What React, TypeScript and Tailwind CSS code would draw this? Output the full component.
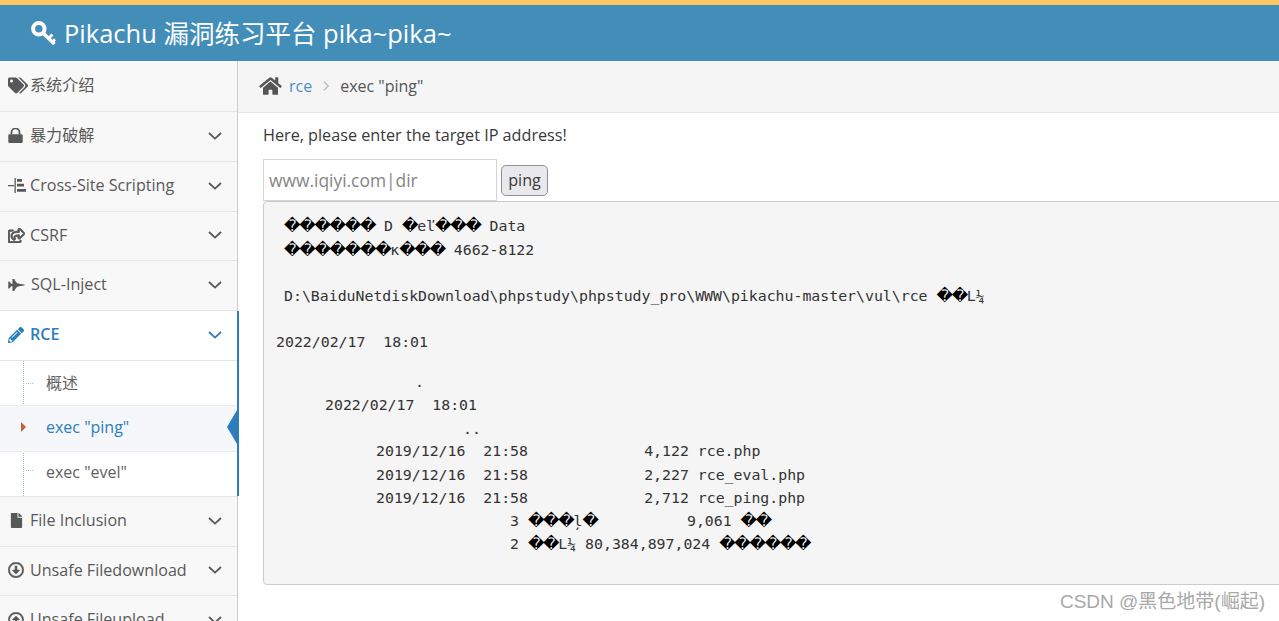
import React from 'react';
import {
  FaFile,
  FaFighterJet,
  FaHome,
  FaPencilAlt,
  FaRegArrowAltCircleDown,
  FaRegArrowAltCircleUp,
  FaRegShareSquare,
  FaTags,
} from 'react-icons/fa';

const KeyIcon = () => (
  <svg viewBox="0 0 24 24" className="mr-2 h-[25px] w-[25px]" fill="none" stroke="currentColor">
    <circle cx="7.500" cy="7.500" r="5.500" strokeWidth="3.800" />
    <path d="M11.500 11.500L22.500 22" strokeWidth="3.400" />
    <path d="M17 16.500l3.600-3.600M20.500 20l2.500-2.500" strokeWidth="2.800" />
  </svg>
);

const LockIcon = () => (
  <svg viewBox="0 0 15 15" className="h-[15px] w-[15px]" fill="currentColor">
    <path d="M1.500 6.200h12a1.200 1.200 0 0 1 1.200 1.200v6.400a1.200 1.200 0 0 1-1.200 1.200h-12A1.200 1.200 0 0 1 .3 13.800V7.400a1.200 1.200 0 0 1 1.200-1.200z" />
    <path d="M3.500 6.500V4.400a4 4 0 0 1 8 0v2.100" fill="none" stroke="currentColor" strokeWidth="1.800" />
  </svg>
);

const SitemapIcon = () => (
  <svg viewBox="0 0 18 15" className="h-[15px] w-[18px]" fill="currentColor">
    <path d="M0 7h6v1.200H0zM6.500 0h1.300v15H6.500zM9 1h5v2.800H9zM9 5.800h7v2.800H9zM9 11h9v2.800H9z" />
  </svg>
);

const Chevron = () => (
  <svg viewBox="0 0 14 8" className="ml-auto h-[8px] w-[14px] shrink-0" fill="none" stroke="currentColor" strokeWidth="1.800">
    <path d="M1 1l6 5.600L13 1" />
  </svg>
);

type Item = { label: string; icon: React.ReactNode; chevron?: boolean; rowClass: string; gap?: string };

const topItems: Item[] = [
  { label: '系统介绍', icon: <FaTags className="h-[17px] w-[20px]" />, rowClass: 'h-[51px]' },
  { label: '暴力破解', icon: <LockIcon />, chevron: true, rowClass: 'h-[50px]' },
  { label: 'Cross-Site Scripting', icon: <SitemapIcon />, chevron: true, rowClass: 'h-[50px]' },
  { label: 'CSRF', icon: <FaRegShareSquare className="h-[15px] w-[17px]" stroke="currentColor" strokeWidth={30} />, chevron: true, rowClass: 'h-[49px]' },
  { label: 'SQL-Inject', icon: <FaFighterJet className="h-[16px] w-[17px]" />, chevron: true, rowClass: 'h-[50px]', gap: 'w-[23px]' },
];

const bottomItems: Item[] = [
  { label: 'File Inclusion', icon: <FaFile className="ml-[2px] h-[15px] w-[13px]" />, chevron: true, rowClass: 'h-[50px]' },
  { label: 'Unsafe Filedownload', icon: <FaRegArrowAltCircleDown className="h-[16px] w-[16px]" stroke="currentColor" strokeWidth={16} />, chevron: true, rowClass: 'h-[49px]' },
  { label: 'Unsafe Fileupload', icon: <FaRegArrowAltCircleUp className="h-[16px] w-[16px]" stroke="currentColor" strokeWidth={16} />, chevron: true, rowClass: 'h-[50px]' },
];

const NavRow = ({ item }: { item: Item }) => (
  <div className={`flex shrink-0 items-center border-b border-[#e5e5e5] bg-[#f8f8f8] pb-[2px] pl-2 pr-[15px] text-[#585858] ${item.rowClass}`}>
    <span className={`flex shrink-0 items-center ${item.gap ?? 'w-[22px]'}`}>{item.icon}</span>
    <span className="text-[16.1px]">{item.label}</span>
    {item.chevron && <Chevron />}
  </div>
);

// the garbled command output: the replacement glyphs are much wider than the mono cells
const Garbled = ({ text }: { text: string }) => (
  <>
    {text.split('').map((ch, i) =>
      ch === '�' ? (
        <span key={i} className="inline-block w-[15.2px] text-center font-['DejaVu_Sans',sans-serif] text-[16px] leading-none text-black">
          {ch}
        </span>
      ) : (
        <React.Fragment key={i}>{ch}</React.Fragment>
      ),
    )}
  </>
);

const outputLines: { text: string; h: string; pl: string }[] = [
  { text: '������ D �eľ��� Data', h: 'h-[24px]', pl: 'pl-[8px]' },
  { text: '�������к��� 4662-8122', h: 'h-[46px]', pl: 'pl-[8px]' },
  { text: 'D:\\BaiduNetdiskDownload\\phpstudy\\phpstudy_pro\\WWW\\pikachu-master\\vul\\rce ��L¼', h: 'h-[46px]', pl: 'pl-[8px]' },
  { text: '2022/02/17  18:01', h: 'h-[40px]', pl: 'pl-0' },
  { text: '.', h: 'h-[23px]', pl: 'pl-[139px]' },
  { text: '2022/02/17  18:01', h: 'h-[24px]', pl: 'pl-[49px]' },
  { text: '..', h: 'h-[22px]', pl: 'pl-[187px]' },
  { text: '2019/12/16  21:58             4,122 rce.php', h: 'h-[24px]', pl: 'pl-[100px]' },
  { text: '2019/12/16  21:58             2,227 rce_eval.php', h: 'h-[23px]', pl: 'pl-[100px]' },
  { text: '2019/12/16  21:58             2,712 rce_ping.php', h: 'h-[23px]', pl: 'pl-[100px]' },
  { text: '3 ���ļ�          9,061 ��', h: 'h-[23px]', pl: 'pl-[234px]' },
  { text: '2 ��L¼ 80,384,897,024 ������', h: 'h-[23px]', pl: 'pl-[234px]' },
];

export default function App() {
  return (
    <div className="flex h-[621px] w-[1279px] flex-col overflow-hidden bg-white font-['Open_Sans','Noto_Sans_CJK_SC',sans-serif] text-[#393939]">
      <header className="flex h-[61px] shrink-0 items-center border-t-[5px] border-[#fcc763] bg-[#438eb9] pl-[31px] text-white">
        <KeyIcon />
        <span className="text-[25.5px]">Pikachu 漏洞练习平台 pika~pika~</span>
      </header>

      <div className="flex min-h-0 flex-1">
        <aside className="w-[238px] shrink-0 border-r border-[#ccc] bg-[#f8f8f8]">
          {topItems.map((item) => (
            <NavRow key={item.label} item={item} />
          ))}

          <div className="relative -mr-[2px] border-r-2 border-[#2b7dbc] bg-white">
            <div className="flex h-[50px] items-center border-b border-[#e5e5e5] pb-[2px] pl-2 pr-[15px] text-[#2b7dbc]">
              <span className="flex w-[22px] shrink-0 items-center">
                <FaPencilAlt className="h-[16px] w-[16px]" />
              </span>
              <span className="text-[16.1px] font-semibold">RCE</span>
              <Chevron />
            </div>

            <div className="relative">
              <div className="absolute bottom-0 left-[23px] top-0 border-l border-dotted border-[#9dbdd6]" />
              <div className="flex h-[44px] items-center pl-[46px] text-[16px] text-[#616161]">
                <span className="absolute left-[26px] w-[7px] border-t border-dotted border-[#9dbdd6]" />
                概述
              </div>
              <div className="relative flex h-[47px] items-center border-y border-dotted border-[#e4e4e4] bg-[#f5f7fb] pb-[3px] pl-[46px] text-[16px] text-[#2b7dbc]">
                <span className="absolute left-[21px] h-0 w-0 border-y-[5px] border-l-[5px] border-y-transparent border-l-[#c86139]" />
                exec "ping"
                <span className="absolute right-0 h-0 w-0 border-y-[17px] border-r-[10px] border-y-transparent border-r-[#2b7dbc]" />
              </div>
              <div className="flex h-[44px] items-center pb-[5px] pl-[46px] text-[16px] text-[#616161]">
                <span className="absolute left-[26px] mt-[-3px] w-[7px] border-t border-dotted border-[#9dbdd6]" />
                exec "evel"
              </div>
            </div>
          </div>

          <div className="border-t border-[#e5e5e5]">
            {bottomItems.map((item) => (
              <NavRow key={item.label} item={item} />
            ))}
          </div>
        </aside>

        <main className="relative min-w-0 flex-1">
          <div className="flex h-[52px] items-center border-b border-[#e5e5e5] bg-[#f5f5f5] pb-[2px] pl-[21px] text-[16px]">
            <FaHome className="mr-[7px] h-[20px] w-[23px] text-[#555]" />
            <span className="text-[#4c8fbd]">rce</span>
            <span className="ml-[11px] mr-[10px] text-[#b2b6bf]">
              <svg viewBox="0 0 8 12" className="h-[12px] w-[7px]" fill="none" stroke="currentColor" strokeWidth="1.500">
                <path d="M1 1l5 5-5 5" />
              </svg>
            </span>
            <span className="text-[#555]">exec "ping"</span>
          </div>

          <div className="pl-[25px]">
            <p className="pt-[11px] text-[16.2px] leading-[22px] text-[#393939]">Here, please enter the target IP address!</p>
            <div className="mt-[13px] flex items-end">
              <div className="flex h-[42px] w-[234px] items-center border border-[#d5d5d5] bg-white pl-[5px] text-[17.4px] text-[#858585]">
                www.iqiyi.com|dir
              </div>
              <button className="mb-[5px] ml-1 h-[31px] w-[47px] rounded-[5px] border border-[#8f8f9d] bg-[#e9e9ed] text-[16.2px] text-[#393939]">
                ping
              </button>
            </div>
            <div className="-mr-2 h-[384px] rounded-[4px] border border-[#ccc] bg-[#f5f5f5] pl-3 pt-[13px]">
              {outputLines.map((line) => (
                <pre key={line.text} className={`font-['DejaVu_Sans_Mono',monospace] text-[14.85px] leading-[23px] text-[#333] ${line.h} ${line.pl}`}>
                  <Garbled text={line.text} />
                </pre>
              ))}
            </div>
          </div>

          <span className="absolute bottom-[5px] right-[14px] font-['Liberation_Sans','Noto_Sans_CJK_SC',sans-serif] text-[19px] text-[#a8a8a8]">
            CSDN @黑色地带(崛起)
          </span>
        </main>
      </div>
    </div>
  );
}
